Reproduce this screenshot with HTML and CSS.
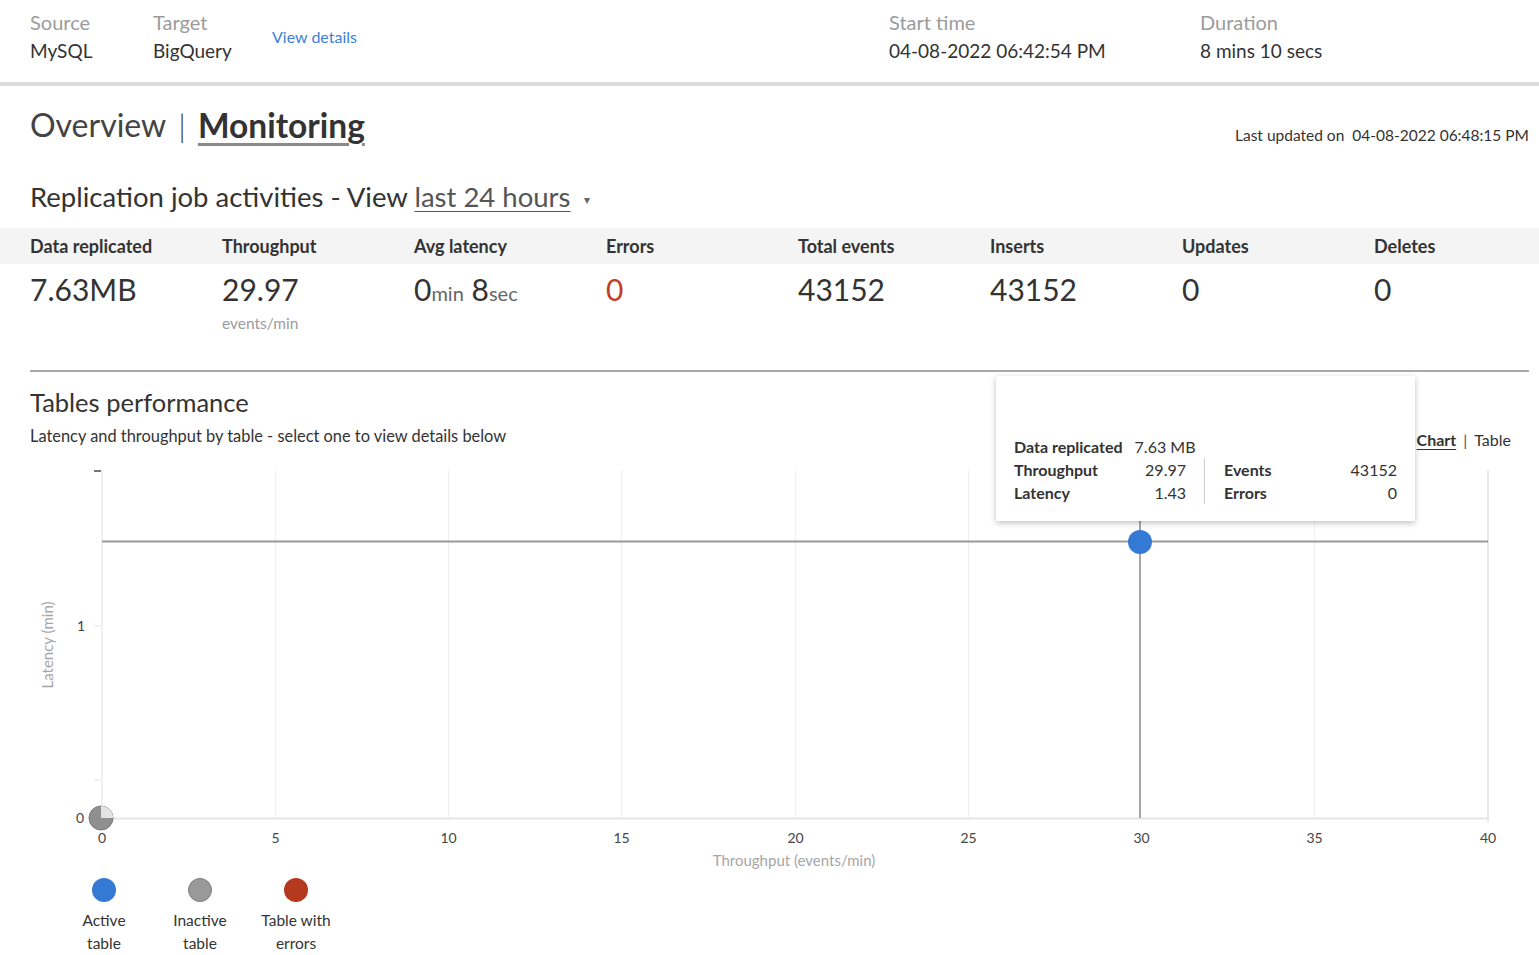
FILE: index.html
```html
<!DOCTYPE html>
<html>
<head>
<meta charset="utf-8">
<link rel="stylesheet" href="styles.css">
</head>
<body>
<div class="page">
  <header class="topbar">
    <div class="meta meta-source"><div class="meta-label">Source</div><div class="meta-value">MySQL</div></div>
    <div class="meta meta-target"><div class="meta-label">Target</div><div class="meta-value">BigQuery</div></div>
    <a class="view-details">View details</a>
    <div class="meta meta-start"><div class="meta-label">Start time</div><div class="meta-value">04-08-2022 06:42:54 PM</div></div>
    <div class="meta meta-duration"><div class="meta-label">Duration</div><div class="meta-value">8 mins 10 secs</div></div>
  </header>

  <div class="title-row">
    <h1 class="tabs"><span class="tab">Overview</span><span class="tab-sep">|</span><span class="tab tab-active">Monitoring</span></h1>
    <div class="last-updated">Last updated on&nbsp; 04-08-2022 06:48:15 PM</div>
  </div>

  <h2 class="activities">Replication job activities - View <span class="period">last 24 hours</span><span class="caret">&#9662;</span></h2>

  <section class="stats">
    <div class="stats-head">
      <div class="stat-col">Data replicated</div>
      <div class="stat-col">Throughput</div>
      <div class="stat-col">Avg latency</div>
      <div class="stat-col">Errors</div>
      <div class="stat-col">Total events</div>
      <div class="stat-col">Inserts</div>
      <div class="stat-col">Updates</div>
      <div class="stat-col">Deletes</div>
    </div>
    <div class="stats-body">
      <div class="stat-col"><div class="stat-value">7.63MB</div></div>
      <div class="stat-col"><div class="stat-value">29.97</div><div class="stat-unit">events/min</div></div>
      <div class="stat-col"><div class="stat-value">0<span class="small-unit">min</span> 8<span class="small-unit">sec</span></div></div>
      <div class="stat-col"><div class="stat-value stat-error">0</div></div>
      <div class="stat-col"><div class="stat-value">43152</div></div>
      <div class="stat-col"><div class="stat-value">43152</div></div>
      <div class="stat-col"><div class="stat-value">0</div></div>
      <div class="stat-col"><div class="stat-value">0</div></div>
    </div>
  </section>

  <section class="perf">
    <div class="perf-head">
      <div>
        <h3 class="perf-title">Tables performance</h3>
        <p class="perf-sub">Latency and throughput by table - select one to view details below</p>
      </div>
      <div class="view-toggle"><span class="toggle-active">Chart</span><span class="toggle-sep">|</span><span>Table</span></div>
    </div>

    <svg class="chart" width="1539" height="415" viewBox="0 455 1539 415" xmlns="http://www.w3.org/2000/svg">
      <g stroke="#f0f0f0" stroke-width="1">
        <line x1="275.5" y1="470" x2="275.5" y2="818"/>
        <line x1="448.5" y1="470" x2="448.5" y2="818"/>
        <line x1="621.5" y1="470" x2="621.5" y2="818"/>
        <line x1="795.5" y1="470" x2="795.5" y2="818"/>
        <line x1="968.5" y1="470" x2="968.5" y2="818"/>
        <line x1="1314.5" y1="470" x2="1314.5" y2="818"/>
      </g>
      <line x1="1488" y1="470" x2="1488" y2="822" stroke="#e2e2e2" stroke-width="1.5"/>
      <line x1="102" y1="470" x2="102" y2="818" stroke="#ececec" stroke-width="1.5"/>
      <line x1="94" y1="471" x2="101" y2="471" stroke="#777" stroke-width="2"/>
      <line x1="94" y1="626" x2="101" y2="626" stroke="#e4e4e4" stroke-width="1"/>
      <line x1="94" y1="780" x2="101" y2="780" stroke="#e4e4e4" stroke-width="1"/>
      <line x1="102" y1="818.5" x2="1488" y2="818.5" stroke="#e6e6e6" stroke-width="2"/>
      <line x1="102" y1="541.5" x2="1488" y2="541.5" stroke="#999" stroke-width="2"/>
      <line x1="1140" y1="521" x2="1140" y2="818" stroke="#888" stroke-width="1.5"/>
      <circle cx="1140" cy="542" r="12" fill="#3479d4"/>
      <circle cx="101" cy="818" r="12" fill="#8f8f8f" stroke="#7a7a7a" stroke-width="1"/>
      <path d="M101 818 L101 806 A12 12 0 0 1 113 818 Z" fill="#e4e4e4"/>
      <g class="tick-label" font-size="14" fill="#444">
        <text x="84" y="823" text-anchor="end">0</text>
        <text x="85" y="631" text-anchor="end">1</text>
        <text x="102" y="843" text-anchor="middle">0</text>
        <text x="275.5" y="843" text-anchor="middle">5</text>
        <text x="448.5" y="843" text-anchor="middle">10</text>
        <text x="621.5" y="843" text-anchor="middle">15</text>
        <text x="795.5" y="843" text-anchor="middle">20</text>
        <text x="968.5" y="843" text-anchor="middle">25</text>
        <text x="1141.5" y="843" text-anchor="middle">30</text>
        <text x="1314.5" y="843" text-anchor="middle">35</text>
        <text x="1488" y="843" text-anchor="middle">40</text>
      </g>
      <text class="axis-title" x="794" y="866" text-anchor="middle">Throughput (events/min)</text>
      <text class="axis-title" x="0" y="0" text-anchor="middle" transform="translate(53 645) rotate(-90)">Latency (min)</text>
    </svg>

    <div class="legend">
      <div class="legend-item"><span class="dot dot-active"></span><span class="legend-label">Active<br>table</span></div>
      <div class="legend-item"><span class="dot dot-inactive"></span><span class="legend-label">Inactive<br>table</span></div>
      <div class="legend-item"><span class="dot dot-error"></span><span class="legend-label">Table with<br>errors</span></div>
    </div>
  </section>

  <div class="tooltip">
    <div class="tt-row tt-first"><span class="tt-label">Data replicated</span><span class="tt-inline">7.63 MB</span></div>
    <div class="tt-grid">
      <div class="tt-col tt-left">
        <div class="tt-row"><span class="tt-label">Throughput</span><span class="tt-val">29.97</span></div>
        <div class="tt-row"><span class="tt-label">Latency</span><span class="tt-val">1.43</span></div>
      </div>
      <div class="tt-col tt-right">
        <div class="tt-row"><span class="tt-label">Events</span><span class="tt-val">43152</span></div>
        <div class="tt-row"><span class="tt-label">Errors</span><span class="tt-val">0</span></div>
      </div>
    </div>
  </div>
</div>
</body>
</html>
```

FILE: styles.css
```css
* { box-sizing: border-box; }
html, body { margin: 0; padding: 0; background: #fff; }
body {
  font-family: "Lato", "Liberation Sans", sans-serif;
  color: #333;
  width: 1539px;
  overflow: hidden;
}
.page { position: relative; min-height: 955px; }

/* top bar */
.topbar {
  display: flex;
  height: 86px;
  border-bottom: 4px solid #dcdcdc;
  padding-left: 30px;
}
.meta { padding-top: 7px; font-size: 20px; line-height: 30px; }
.meta-label { color: #9b9b9b; }
.meta-value { color: #333; font-size: 19px; margin-top: -1px; }
.meta-source { width: 123px; }
.meta-target { width: 119px; }
.meta-start { width: 311px; }
.view-details {
  color: #3b7fd6;
  font-size: 16px;
  line-height: 30px;
  padding-top: 22px;
  width: 617px;
}

/* title row */
.title-row {
  display: flex;
  justify-content: space-between;
  align-items: flex-end;
  padding: 19px 10px 0 30px;
}
.tabs {
  margin: 0;
  font-weight: 400;
  font-size: 32px;
  line-height: 40px;
  color: #444;
  display: flex;
}
.tab-sep { margin: 0 12px 0 12px; font-weight: 300; }
.tab-active {
  font-size: 33.5px;
  font-weight: 700;
  color: #333;
  text-decoration: underline;
  text-decoration-color: #8a8a8a;
  text-decoration-thickness: 3px;
  text-underline-offset: 5px;
}
.last-updated { font-size: 15.5px; line-height: 20px; color: #333; }

/* activities */
.activities {
  margin: 35px 0 0 30px;
  font-size: 27.5px;
  line-height: 34px;
  font-weight: 400;
  color: #333;
}
.period {
  color: #555;
  text-decoration: underline;
  text-decoration-thickness: 1px;
  text-underline-offset: 4px;
}
.caret { font-size: 12px; color: #666; margin-left: 14px; vertical-align: middle; }

/* stats */
.stats { margin-top: 11px; }
.stats-head {
  display: flex;
  background: #f4f4f4;
  height: 36px;
  padding-left: 30px;
  align-items: center;
  font-size: 18px;
  font-weight: 700;
  color: #333;
}
.stats-body { display: flex; padding-left: 30px; height: 80px; }
.stat-col { width: 192px; flex: none; }
.stat-value { font-size: 30px; line-height: 50px; color: #333; }
.small-unit { font-size: 20px; color: #666; }
.stat-error { color: #c43d26; }
.stat-unit { font-size: 15.5px; color: #9b9b9b; line-height: 18px; margin-top: 0; }

/* tables performance */
.perf {
  margin: 26px 10px 0 30px;
  border-top: 2px solid #a9a9a9;
  padding-top: 13px;
}
.perf-head { display: flex; justify-content: space-between; align-items: flex-end; }
.perf-title { margin: 0; font-size: 25.5px; line-height: 34px; font-weight: 400; color: #333; }
.perf-sub { margin: 2px 0 0 0; font-size: 16.4px; line-height: 30px; color: #333; }
.view-toggle { font-size: 16px; line-height: 30px; color: #333; margin-right: 18px; margin-bottom: -4px; }
.toggle-active { font-weight: 700; text-decoration: underline; text-underline-offset: 3px; }
.toggle-sep { margin: 0 7px; color: #555; }

.chart { display: block; margin-left: -30px; margin-top: 4px; }
.chart text { font-family: "Lato", "Liberation Sans", sans-serif; }
.axis-title { font-size: 15px; fill: #a6a6a6; }

.legend { display: flex; margin-left: 26px; margin-top: 8px; }
.legend-item { width: 96px; display: flex; flex-direction: column; align-items: center; }
.dot { width: 24px; height: 24px; border-radius: 50%; display: block; }
.dot-active { background: #3479d4; }
.dot-inactive { background: #9a9a9a; border: 1px solid #7c7c7c; }
.dot-error { background: #b5391e; }
.legend-label { text-align: center; font-size: 15.5px; line-height: 23px; margin-top: 7px; color: #333; }

/* tooltip */
.tooltip {
  position: absolute;
  left: 996px;
  top: 376px;
  width: 419px;
  height: 145px;
  background: #fff;
  box-shadow: 0 2px 6px rgba(0,0,0,0.25);
  padding: 59px 18px 0 18px;
  font-size: 16px;
  color: #333;
}
.tt-row { display: flex; line-height: 23px; }
.tt-label { font-weight: 700; }
.tt-inline { margin-left: 12px; }
.tt-grid { display: flex; }
.tt-col { width: 191px; }
.tt-left { border-right: 1px solid #ccc; padding-right: 18px; }
.tt-right { padding-left: 19px; flex: 1; }
.tt-col .tt-row { justify-content: space-between; }
```
